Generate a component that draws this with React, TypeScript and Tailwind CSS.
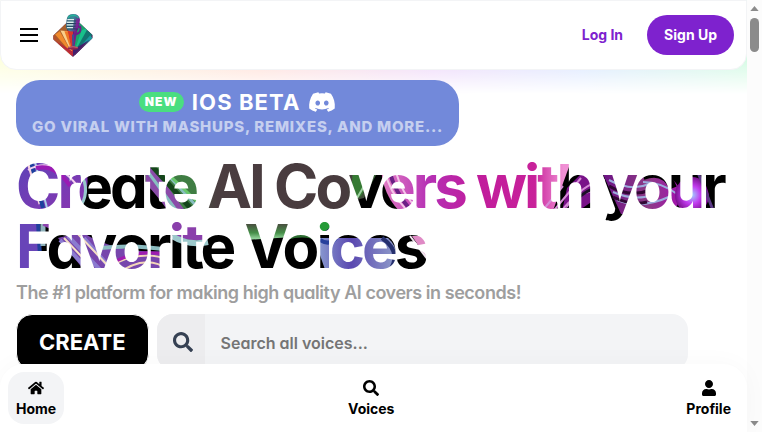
import type { ReactNode } from 'react';
import { FaDiscord, FaHome, FaSearch, FaUser } from 'react-icons/fa';

interface NavItemProps {
  icon: ReactNode;
  label: string;
  active?: boolean;
}

// marbled artwork that shows through the letters of the headline
const headlineArt = `
<svg xmlns="http://www.w3.org/2000/svg" width="716" height="124" viewBox="0 0 716 124">
  <defs>
    <linearGradient id="c" x1="0" x2="1" y2="1"><stop offset="0" stop-color="#5b45b8"/><stop offset="1" stop-color="#8d34b0"/></linearGradient>
    <linearGradient id="d" x1="0" x2="1"><stop offset="0" stop-color="#4a5a44"/><stop offset=".15" stop-color="#4a3d40"/><stop offset=".8" stop-color="#483b3e"/><stop offset="1" stop-color="#2f6b30"/></linearGradient>
    <linearGradient id="p" x1="0" x2="1"><stop offset="0" stop-color="#e27cc4"/><stop offset=".25" stop-color="#b530b4"/><stop offset=".5" stop-color="#c01c9c"/><stop offset=".8" stop-color="#c8229a"/><stop offset=".95" stop-color="#f090d4"/></linearGradient>
    <linearGradient id="g" y2="1" x2="0"><stop offset="0" stop-color="#4a403e"/><stop offset=".6" stop-color="#458f48"/><stop offset="1" stop-color="#a5e3ae"/></linearGradient>
    <linearGradient id="v" x1="0" x2="1"><stop offset="0" stop-color="#8fa5d4"/><stop offset=".45" stop-color="#5a48b0"/><stop offset="1" stop-color="#8f9cca"/></linearGradient>
    <linearGradient id="y" x1="0" x2="1"><stop offset="0" stop-color="#6b1184"/><stop offset=".6" stop-color="#8d3b86"/><stop offset="1" stop-color="#a312b0"/></linearGradient>
    <radialGradient id="u"><stop offset="0" stop-color="#9fd0ff"/><stop offset=".5" stop-color="#c23cf0"/><stop offset="1" stop-color="#7a118e"/></radialGradient>
  </defs>
  <rect width="716" height="124" fill="#000"/>
  <path d="M0 0H62C78 18 72 40 58 60H0Z" fill="url(#c)"/>
  <path d="M12 6l12 42" stroke="#f7d3df" stroke-width="3"/><path d="M15 6l12 46" stroke="#1c3f9d" stroke-width="4"/><path d="M19 6l12 46" stroke="#a8cbe8" stroke-width="2"/>
  <path d="M12 14Q36 0 60 28" fill="none" stroke="#f5d0ef" stroke-width="2"/><path d="M20 12Q40 8 54 30" fill="none" stroke="#9a1bb4" stroke-width="4"/>
  <path d="M64 16Q76 36 62 54" fill="none" stroke="#98c8cc" stroke-width="3"/>
  <path d="M130 4h40l16 54h-32Q142 40 130 28Z" fill="#8a4ba8"/><path d="M134 6h50v50h-14Z" fill="#3f7d43"/>
  <path d="M132 16l28 38M140 6l44 48" stroke="#88bfc0" stroke-width="3"/><path d="M136 10l42 46" stroke="#15451b" stroke-width="5"/><path d="M152 18l36 34" stroke="#68c76c" stroke-width="3"/>
  <path d="M172 0H370L348 42Q334 44 328 60H190Z" fill="url(#d)"/>
  <g transform="translate(-15)">
    <path d="M352 8h28l-20 32-10 6Z" fill="#367a34"/><path d="M376 8l-20 34" stroke="#9ed0a0" stroke-width="2"/>
    <path d="M380 0H572L550 60H404Q378 40 380 0Z" fill="url(#p)"/>
    <path d="M383 12Q388 36 404 52M394 12Q400 38 418 54" fill="none" stroke="#f3c5e8" stroke-width="2"/><path d="M388 14Q394 36 408 52" fill="none" stroke="#6b2185" stroke-width="4"/>
    <path d="M560 60L566 32 580 18H602V38L570 60Z" fill="#791389"/>
    <path d="M542 54l20-24M550 58l30-36M560 56Q574 34 604 34M566 52Q580 28 604 24" fill="none" stroke="#d58ad6" stroke-width="2"/><path d="M562 60Q580 32 604 30" fill="none" stroke="#1d1028" stroke-width="3"/>
    <path d="M600 14H640Q690 20 676 50L640 58H620Z" fill="url(#y)"/>
    <path d="M608 24Q630 36 648 28M612 36Q634 46 654 38M616 44Q640 54 670 40M642 26Q660 26 676 38" fill="none" stroke="#9cacdc" stroke-width="2"/><path d="M608 30Q628 42 650 34M612 41Q630 50 646 46" fill="none" stroke="#300734" stroke-width="3"/>
    <path d="M642 20Q664 12 672 32" fill="none" stroke="#000" stroke-width="8"/>
    <ellipse cx="691" cy="39" rx="17" ry="18" fill="url(#u)"/><path d="M698 10L716 60H732V10Z" fill="#000"/><path d="M696 14L712 54" stroke="#5b3a86" stroke-width="3"/>
  </g>
  <path d="M0 62H24L22 124H0Z" fill="#6844b8"/><path d="M22 66l2 34" stroke="#20409c" stroke-width="4"/><path d="M27 64l0 26" stroke="#8fb2bb" stroke-width="5"/><path d="M28 67Q40 74 52 66" fill="none" stroke="#8d43ae" stroke-width="6"/>
  <path d="M42 82L66 76Q84 88 106 92 134 98 152 94V124H76Z" fill="#7746ac"/>
  <path d="M44 84l34 36M52 80l36 38M68 82l28 32" stroke="#8b7bd0" stroke-width="4"/><path d="M48 82l36 38M62 78l32 34" stroke="#f6dfc4" stroke-width="2"/>
  <path d="M84 92Q120 88 152 94" fill="none" stroke="#8cbcc0" stroke-width="4"/><path d="M90 112Q126 92 152 104M98 120Q130 96 152 114" fill="none" stroke="#f2d6b8" stroke-width="2"/><path d="M98 106Q124 92 152 99" fill="none" stroke="#a01cb0" stroke-width="3"/>
  <path d="M154 62H190V84Q170 86 154 78Z" fill="#8a3fab"/><path d="M156 80Q172 90 192 86" fill="none" stroke="#9cc8cb" stroke-width="6"/>
  <path d="M228 66H292V80L228 84Z" fill="url(#g)"/><path d="M270 82Q290 76 304 84" fill="none" stroke="#2c6d31" stroke-width="4"/>
  <path d="M300 62H326V78H300Z" fill="#259a37"/><path d="M308 78l18-14" stroke="#16204c" stroke-width="3"/>
  <path d="M298 82H372Q388 96 374 122H312Z" fill="url(#v)"/><path d="M304 84Q314 90 320 82" fill="none" stroke="#26409c" stroke-width="4"/>
  <path d="M366 82Q386 96 374 114" fill="none" stroke="#26306e" stroke-width="4"/><path d="M396 80Q404 92 412 104V80Z" fill="#df8ac5"/><path d="M394 80l18 24" stroke="#f0e6ee" stroke-width="2"/>
</svg>`;

const headlineBackground = `url("data:image/svg+xml,${encodeURIComponent(headlineArt)}")`;

function Logo() {
  return (
    <svg viewBox="0 0 120 130" className="h-[43px] w-10" aria-hidden="true">
      <defs>
        <linearGradient id="micHead" x1="0" x2="1" y1="0" y2="0.4">
          <stop offset="0" stopColor="#3c6a80" />
          <stop offset="0.5" stopColor="#37909a" />
          <stop offset="1" stopColor="#6b1c86" />
        </linearGradient>
        <clipPath id="diamond">
          <path d="M0 66L60 8l60 56v8L60 130 0 76Z" />
        </clipPath>
      </defs>
      <g clipPath="url(#diamond)">
        <rect width="120" height="130" fill="#5c2358" />
        <path d="M60 124L0 64 36 20Z" fill="#a8602e" />
        <path d="M60 124L0 60v24Z" fill="#b5532b" />
        <path d="M60 124L6 62l14-10Z" fill="#f08a2c" />
        <path d="M60 124L22 50l22 2Z" fill="#fbd08a" />
        <path d="M60 124L34 52h12Z" fill="#ee7a24" />
        <path d="M60 124L44 50h16Z" fill="#d9362d" />
        <path d="M60 124L0 82v50Z" fill="#d9532d" />
        <path d="M60 124L62 50h16Z" fill="#7a1d86" />
        <path d="M60 124L78 22l24 26Z" fill="#1aa46a" />
        <path d="M60 124L86 50l12-6 8 10Z" fill="#19c08b" />
        <path d="M60 124L102 48l18 14Z" fill="#12756f" />
        <path d="M60 124L112 64l10 12Z" fill="#1a9a9f" />
        <path d="M60 124L120 74v56Z" fill="#3a2a78" />
        <path d="M8 82l52 46 46-44-46 30Z" fill="#b8283c" />
        <path d="M60 128v-20l50-30Z" fill="#40206e" />
      </g>
      <path d="M78 42Q84 30 82 50 80 60 64 62L60 80" fill="none" stroke="#6b1e8a" strokeWidth="6" />
      <path d="M57 62h7l-2 38h-4Z" fill="#3e4f91" />
      <path d="M45 100q15-5 30 0v6q-15 4-30 0Z" fill="#8f2450" />
      <path d="M46 101q14-4 28 0" fill="none" stroke="#e19180" strokeWidth="2" />
      <path d="M41 16Q43 0 61 0T81 17L77 42Q74 54 58 53T39 40Z" fill="url(#micHead)" />
      <path d="M45 12Q50 3 62 4T76 12" fill="none" stroke="#25b39b" strokeWidth="4" />
      <path d="M41 21h38M41 29h37M40 37h36M42 45h32" stroke="#23405c" strokeWidth="3" />
      <path d="M43 17h20M42 25h20M41 33h20M42 41h18" stroke="#dcebea" strokeWidth="4" />
      <path d="M70 16h10l-5 28h-8Z" fill="#8a1ca0" opacity="0.7" />
    </svg>
  );
}

function Header() {
  return (
    <header className="relative flex h-[70px] items-center justify-between rounded-b-2xl border border-gray-100 bg-white pr-3 pl-[19px]">
      <div className="flex items-center gap-[15px]">
        <button type="button" aria-label="Menu">
          <svg viewBox="0 0 18 14" className="h-[14px] w-[18px]">
            <path d="M0 0h18v2H0zM0 6h18v2H0zM0 12h18v2H0z" />
          </svg>
        </button>
        <a href="#" aria-label="Main page">
          <Logo />
        </a>
      </div>
      <div className="flex items-center gap-6 text-sm font-bold">
        <a href="#login" className="text-[#7e22ce]">
          Log In
        </a>
        <button type="button" className="h-10 rounded-full bg-[#7e22ce] px-[17px] text-white">
          Sign Up
        </button>
      </div>
    </header>
  );
}

function Banner() {
  return (
    <a
      href="#beta"
      className="flex h-[66px] flex-col items-center justify-center rounded-3xl bg-[#7289da] px-4 text-white"
    >
      <div className="flex items-center gap-2">
        <span className="rounded-full bg-[#4ade80] px-[6px] text-xs leading-5 font-black tracking-widest">
          NEW
        </span>
        <span className="text-[22px] leading-7 font-bold tracking-wider">IOS BETA</span>
        <FaDiscord className="size-7" />
      </div>
      <p className="text-[15px] leading-[22px] font-extrabold tracking-wider text-white/60">
        GO VIRAL WITH MASHUPS, REMIXES, AND MORE...
      </p>
    </a>
  );
}

function NavItem({ icon, label, active }: NavItemProps) {
  return (
    <a
      href="#"
      className={`flex flex-col items-center gap-[5px] rounded-2xl px-2 pt-2 pb-[7px] text-sm leading-4 font-bold text-black ${
        active ? 'bg-gray-100' : ''
      }`}
    >
      {icon}
      {label}
    </a>
  );
}

function ScrollBar() {
  return (
    <div className="flex w-[15px] shrink-0 flex-col items-center bg-[#fcfcfc] py-[6px]">
      <svg viewBox="0 0 10 6" className="h-[5px] w-[9px] fill-[#8b8b8b]">
        <path d="M5 0l5 6H0z" />
      </svg>
      <div className="mt-[7px] h-[34px] w-[9px] rounded-full bg-[#8b8b8b]" />
      <svg viewBox="0 0 10 6" className="mt-auto h-[5px] w-[9px] fill-[#8b8b8b]">
        <path d="M0 0h10L5 6z" />
      </svg>
    </div>
  );
}

function App() {
  return (
    <div className="flex h-screen overflow-hidden bg-white font-['Inter',sans-serif] [font-feature-settings:'cv11']">
      <div className="relative flex min-w-0 flex-1 flex-col">
        <div className="absolute inset-x-0 top-0 h-[94px] bg-[linear-gradient(to_right,#fdffe0,#ffe3dc_35%,#f0dcfa_58%,#dfeaff_78%,#d8fbe6)] [mask-image:linear-gradient(#000_65%,transparent)]" />
        <Header />
        <main className="relative min-h-0 flex-1 overflow-hidden px-4 pt-[10px]">
          <div className="flex">
            <Banner />
          </div>
          <h1
            className="mt-[10px] bg-black bg-clip-text text-[60px] leading-[60px] font-bold tracking-tighter text-transparent"
            style={{ backgroundImage: headlineBackground }}
          >
            Create AI Covers with your Favorite Voices
          </h1>
          <p className="mt-[3px] text-lg leading-7 font-semibold tracking-tight text-[#9e9e9e]">
            The #1 platform for making high quality AI covers in seconds!
          </p>
          <form className="mt-[7px] flex max-w-2xl gap-2">
            <button
              type="button"
              className="h-14 rounded-2xl border border-white bg-black px-[22px] text-[22px] font-bold text-white"
            >
              CREATE
            </button>
            <div className="flex h-14 flex-1 overflow-hidden rounded-2xl bg-gray-100">
              <label
                htmlFor="search"
                className="flex w-12 items-center justify-center bg-[#ededef] pl-1 text-gray-700"
              >
                <FaSearch className="size-5" />
              </label>
              <input
                id="search"
                type="text"
                placeholder="Search all voices..."
                className="min-w-0 flex-1 px-4 pt-px font-semibold outline-none placeholder:text-[#757575]"
              />
            </div>
          </form>
        </main>
        <nav className="relative flex justify-between rounded-t-3xl bg-white p-2 shadow-[0_0_25px_rgba(0,0,0,0.03)]">
          <NavItem icon={<FaHome className="size-4" />} label="Home" active />
          <NavItem icon={<FaSearch className="size-4" />} label="Voices" />
          <NavItem icon={<FaUser className="size-4" />} label="Profile" />
        </nav>
      </div>
      <ScrollBar />
    </div>
  );
}

export default App;
